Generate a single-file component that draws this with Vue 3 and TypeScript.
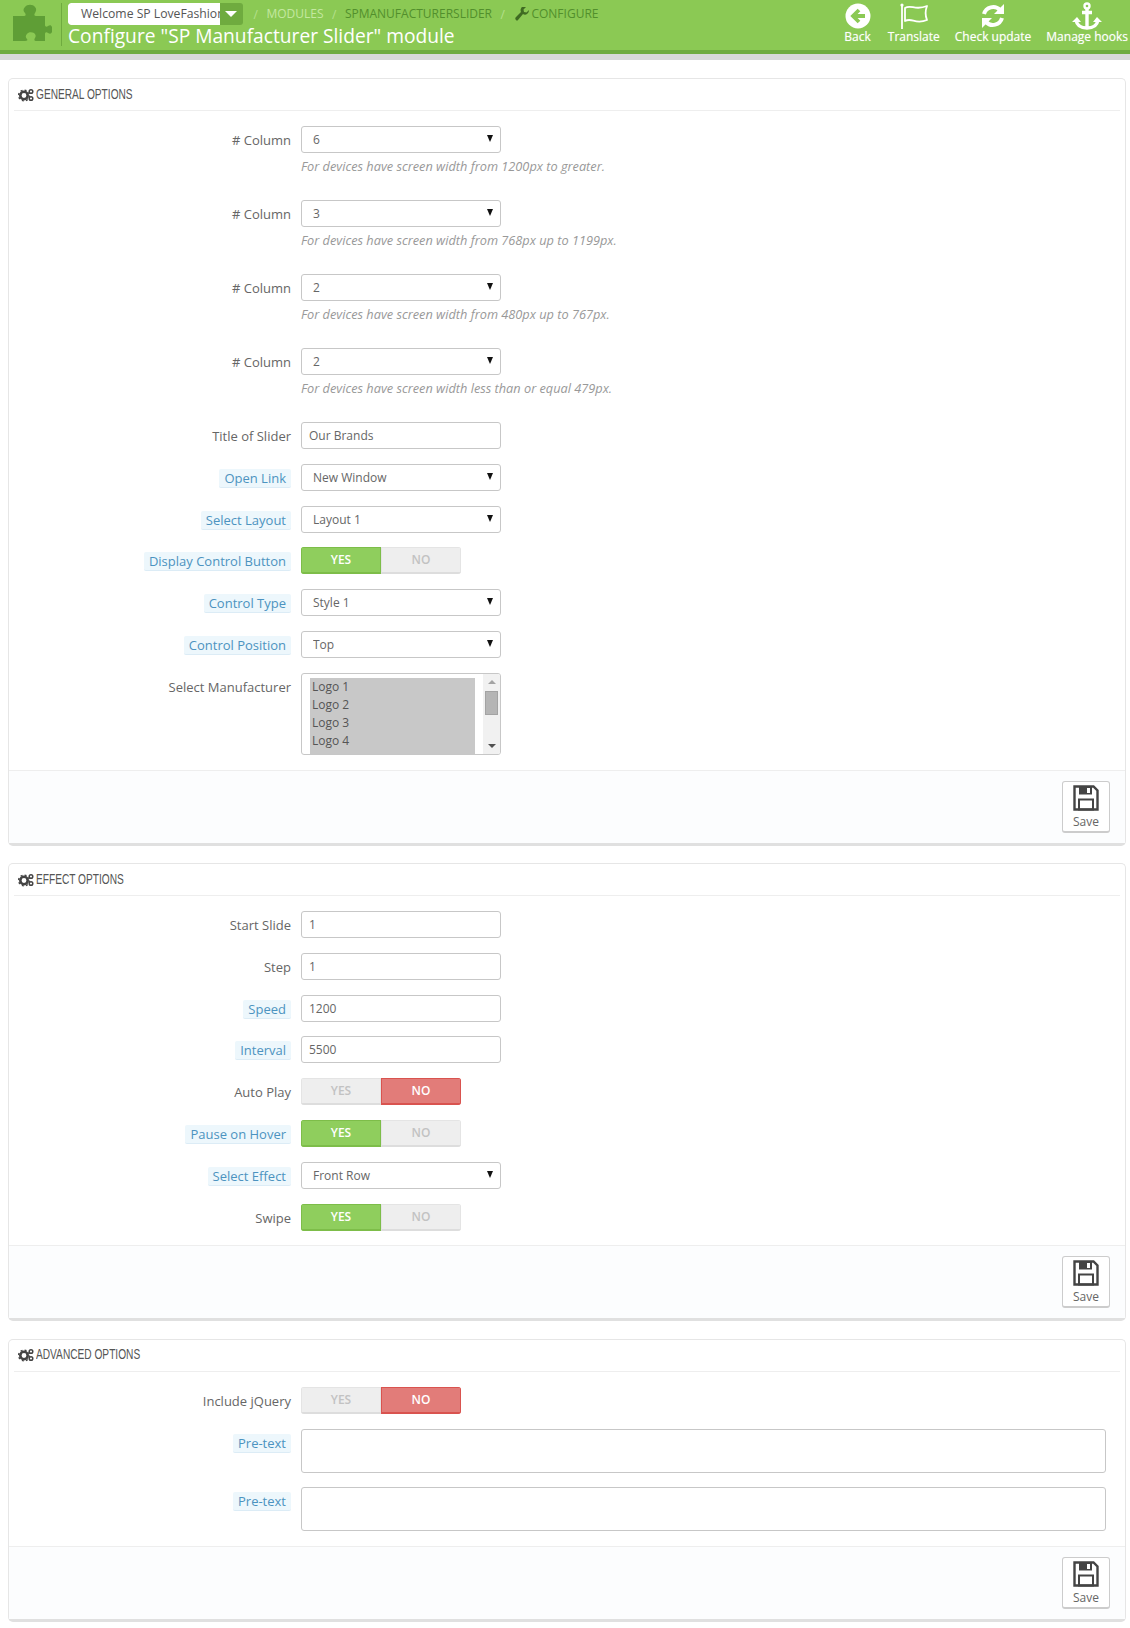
<script setup lang="ts">
type Row = {
  label: string
  hint?: boolean
  type: 'select' | 'input' | 'toggle' | 'list' | 'area'
  value?: string
  on?: boolean
  help?: string
}

const sections: { title: string; rows: Row[] }[] = [
  {
    title: 'General Options',
    rows: [
      { label: '# Column', type: 'select', value: '6', help: 'For devices have screen width from 1200px to greater.' },
      { label: '# Column', type: 'select', value: '3', help: 'For devices have screen width from 768px up to 1199px.' },
      { label: '# Column', type: 'select', value: '2', help: 'For devices have screen width from 480px up to 767px.' },
      { label: '# Column', type: 'select', value: '2', help: 'For devices have screen width less than or equal 479px.' },
      { label: 'Title of Slider', type: 'input', value: 'Our Brands' },
      { label: 'Open Link', hint: true, type: 'select', value: 'New Window' },
      { label: 'Select Layout', hint: true, type: 'select', value: 'Layout 1' },
      { label: 'Display Control Button', hint: true, type: 'toggle', on: true },
      { label: 'Control Type', hint: true, type: 'select', value: 'Style 1' },
      { label: 'Control Position', hint: true, type: 'select', value: 'Top' },
      { label: 'Select Manufacturer', type: 'list' }
    ]
  },
  {
    title: 'Effect Options',
    rows: [
      { label: 'Start Slide', type: 'input', value: '1' },
      { label: 'Step', type: 'input', value: '1' },
      { label: 'Speed', hint: true, type: 'input', value: '1200' },
      { label: 'Interval', hint: true, type: 'input', value: '5500' },
      { label: 'Auto Play', type: 'toggle', on: false },
      { label: 'Pause on Hover', hint: true, type: 'toggle', on: true },
      { label: 'Select Effect', hint: true, type: 'select', value: 'Front Row' },
      { label: 'Swipe', type: 'toggle', on: true }
    ]
  },
  {
    title: 'Advanced Options',
    rows: [
      { label: 'Include jQuery', type: 'toggle', on: false },
      { label: 'Pre-text', hint: true, type: 'area' },
      { label: 'Pre-text', hint: true, type: 'area' }
    ]
  }
]

const logos = ['Logo 1', 'Logo 2', 'Logo 3', 'Logo 4']
</script>

<template>
  <div class="page">
    <header class="topbar">
      <svg class="puzzle" viewBox="0 0 40 38" width="40" height="38">
        <path d="M1 13h11c2 0 2-2 1-3-2-2-2-4 0-6 2-3 8-3 10 0 2 2 1 4 0 6-1 1-1 3 1 3h9v9c0 2 2 2 3 1 2-1 3-1 4 1v5c-1 2-2 2-4 1-1-1-3-1-3 1v7H24c-2 0-2-2-1-3 1-2 1-3-1-5-2-1-6-1-7 1-2 2-1 4 0 5 1 1 0 2-2 2H1z" fill="#5f9e36" />
      </svg>
      <div class="titles">
        <div class="crumbs">
          <div class="shop">
            <span class="shop-name">Welcome SP LoveFashion</span>
            <span class="shop-caret"></span>
          </div>
          <span class="sep">/</span>
          <span class="crumb first">MODULES</span>
          <span class="sep">/</span>
          <span class="crumb">SPMANUFACTURERSLIDER</span>
          <span class="sep">/</span>
          <span class="crumb last">
            <svg viewBox="0 0 14 14" width="14" height="14">
              <path d="M1 13c-1-1-1-2 0-3l5-5c-1-2 0-4 1-5 1-1 3-1 4 0L8.500 2.500 9 5l2.500.5L14 3c0 2-1 3-2 4-1 1-3 1-4 0l-5 6c-1 1-1 1-2 0z" fill="#3f6b22" />
            </svg>
            CONFIGURE
          </span>
        </div>
        <h1>Configure "SP Manufacturer Slider" module</h1>
      </div>
      <nav class="actions">
        <a class="action back">
          <svg viewBox="0 0 26 26" width="26" height="26">
            <circle cx="13" cy="13" r="12.500" fill="#fff" />
            <path d="M20 13H9M14 7 8 13l6 6" fill="none" stroke="#8bc954" stroke-width="3.800" />
          </svg>
          <span>Back</span>
        </a>
        <a class="action translate">
          <svg viewBox="0 0 30 26" width="30" height="26">
            <circle cx="3" cy="2" r="1.600" fill="#fff" />
            <path d="M3 2v24" stroke="#fff" stroke-width="1.800" />
            <path d="M6 5c6-4 10 3 22-2-2 5-2 9 0 14-12 5-15-3-22 1z" fill="none" stroke="#fff" stroke-width="1.800" stroke-linejoin="round" />
          </svg>
          <span>Translate</span>
        </a>
        <a class="action update">
          <svg viewBox="0 0 26 26" width="26" height="26">
            <path d="M4 11a9.500 9.500 0 0 1 16-4" fill="none" stroke="#fff" stroke-width="4" />
            <path d="M24 1v10H14z" fill="#fff" />
            <path d="M22 15a9.500 9.500 0 0 1-16 4" fill="none" stroke="#fff" stroke-width="4" />
            <path d="M2 25V15h10z" fill="#fff" />
          </svg>
          <span>Check update</span>
        </a>
        <a class="action hooks">
          <svg viewBox="0 0 30 28" width="30" height="28">
            <circle cx="15" cy="4" r="2.500" fill="none" stroke="#fff" stroke-width="2.400" />
            <path d="M10 10.500h10M15 7v18" stroke="#fff" stroke-width="3.400" fill="none" />
            <path d="M4 18c1 6 6 8 11 8s10-2 11-8" fill="none" stroke="#fff" stroke-width="3.400" />
            <path d="M0 20l5-5 4 5zM30 20l-5-5-4 5z" fill="#fff" />
          </svg>
          <span>Manage hooks</span>
        </a>
      </nav>
    </header>
    <div class="subbar"></div>

    <main class="content">
      <section v-for="section in sections" :key="section.title" class="panel">
        <div class="panel-heading">
          <svg viewBox="0 0 16 14" width="16" height="14">
            <circle cx="6" cy="7.500" r="3.700" fill="none" stroke="#444" stroke-width="2.600" />
            <circle cx="6" cy="7.500" r="5.400" fill="none" stroke="#444" stroke-width="1.400" stroke-dasharray="2 2.240" />
            <circle cx="13" cy="3.500" r="1.800" fill="none" stroke="#444" stroke-width="1.500" />
            <circle cx="13" cy="10.500" r="1.800" fill="none" stroke="#444" stroke-width="1.500" />
          </svg>
          <span class="heading-text">{{ section.title }}</span>
        </div>

        <div class="form">
          <div v-for="(row, i) in section.rows" :key="i" class="form-row">
            <div class="label-cell">
              <span :class="['label', { hint: row.hint }]">{{ row.label }}</span>
            </div>
            <div class="control">
              <div v-if="row.type === 'select'" class="select-wrap">
                <select class="field select">
                  <option>{{ row.value }}</option>
                </select>
              </div>
              <input v-else-if="row.type === 'input'" class="field input" type="text" :value="row.value" />
              <div v-else-if="row.type === 'toggle'" class="toggle">
                <span :class="['half', { yes: row.on }]">YES</span>
                <span :class="['half', { no: !row.on }]">NO</span>
              </div>
              <div v-else-if="row.type === 'list'" class="listbox">
                <div class="options">
                  <div v-for="logo in logos" :key="logo" class="option">{{ logo }}</div>
                </div>
                <div class="scrollbar">
                  <span class="up"></span>
                  <span class="thumb"></span>
                  <span class="down"></span>
                </div>
              </div>
              <textarea v-else class="field area"></textarea>
              <p v-if="row.help" class="help">{{ row.help }}</p>
            </div>
          </div>
        </div>

        <div class="panel-footer">
          <button class="save" type="button">
            <svg viewBox="0 0 26 26" width="26" height="26">
              <path d="M1.500 1.500h19l4 4v19h-23z" fill="none" stroke="#444" stroke-width="2.400" />
              <path d="M6 1.500h13v8H6z" fill="#444" />
              <path d="M14 3h3v5h-3z" fill="#fff" />
              <path d="M6 14.500h14v10H6z" fill="none" stroke="#444" stroke-width="2" />
            </svg>
            <span>Save</span>
          </button>
        </div>
      </section>
    </main>
  </div>
</template>

<style>
html,
body {
  background: #fff;
}
</style>

<style scoped>
.page {
  width: 1130px;
  height: 1628px;
  overflow: hidden;
  font-family: "Open Sans", sans-serif;
  font-size: 13px;
  color: #666;
}

.topbar {
  height: 50px;
  background: #8bc954;
  border-bottom: 4px solid #6fab3f;
  display: flex;
  box-sizing: content-box;
}

.subbar {
  height: 6px;
  background: #d8d8d8;
}

.puzzle {
  margin: 3px 0 0 12px;
}

.titles {
  margin-left: 9px;
  padding-left: 6px;
  border-left: 1px solid #6fab3f;
  margin-top: 3px;
  height: 43px;
  flex: 1;
  min-width: 0;
}

.crumbs {
  display: flex;
  align-items: center;
  height: 22px;
}

.shop {
  display: flex;
  width: 175px;
  height: 22px;
  margin-right: 2px;
  background: #6fab3f;
  border-radius: 3px;
  overflow: hidden;
}

.shop-name {
  width: 152px;
  flex: none;
  background: #fff;
  color: #555;
  font-size: 12.200px;
  line-height: 21px;
  padding-left: 13px;
  box-sizing: border-box;
  white-space: nowrap;
  overflow: hidden;
  border-radius: 3px 0 0 3px;
}

.shop-caret {
  width: 0;
  height: 0;
  margin: 8px 0 0 5px;
  border-left: 6px solid transparent;
  border-right: 6px solid transparent;
  border-top: 6px solid #fff;
}

.sep {
  margin: 0 8.500px;
  color: #b5e08c;
  font-size: 12px;
}

.crumb {
  color: #528f2c;
  font-size: 12px;
  display: flex;
  align-items: center;
  gap: 2px;
  padding-bottom: 1px;
}

.crumb.first {
  color: #c4e8a0;
}

.crumb.last {
  margin-left: 2px;
}

h1 {
  margin: -1px 0 0;
  font-weight: 400;
  font-size: 19.200px;
  line-height: 24px;
  color: #fff;
  white-space: nowrap;
}

.actions {
  display: flex;
  align-items: flex-start;
  padding-right: 2px;
}

.action {
  display: flex;
  flex-direction: column;
  align-items: center;
  color: #fff;
  font-size: 12px;
  line-height: 14px;
  text-shadow: 0 0 1px rgba(255, 255, 255, .5);
  padding-top: 2px;
}

.action svg {
  height: 28px;
}

.back {
  margin-right: 17px;
}

.translate {
  margin-right: 15px;
}

.update {
  margin-right: 15px;
}

.content {
  padding: 18px 4px 0 8px;
}

.panel {
  border: 1px solid #e6e6e6;
  border-bottom: 3px solid #e0e0e0;
  border-radius: 5px;
  background: #fff;
  margin-bottom: 17.500px;
}

.panel-heading {
  margin: 0 5px;
  height: 31px;
  box-sizing: content-box;
  border-bottom: 1px solid #eee;
  display: flex;
  align-items: center;
  gap: 2px;
  padding-left: 4px;
  color: #555;
}

.heading-text {
  display: inline-block;
  transform: scaleX(0.7);
  transform-origin: left center;
  white-space: nowrap;
  font-family: "Liberation Sans", sans-serif;
  font-size: 14.500px;
  line-height: 16px;
  margin-bottom: 2px;
  text-transform: uppercase;
}

.form {
  padding-top: 15px;
}

.form-row {
  display: grid;
  grid-template-columns: 282px 1fr;
  column-gap: 10px;
  margin-bottom: 14.800px;
}

.label-cell {
  text-align: right;
  line-height: 18px;
  padding-top: 5px;
}

.label {
  display: inline-block;
  white-space: nowrap;
}

.label.hint {
  background: #edf7fc;
  color: #4c93c0;
  border-bottom: 1px solid #dcecf6;
  border-radius: 2px;
  padding: 0 5px;
}

.control {
  padding-right: 19px;
}

.field {
  display: block;
  box-sizing: border-box;
  width: 200px;
  height: 27px;
  border: 1px solid #c7c7c7;
  border-radius: 3px;
  background: #fff;
  color: #666;
  font-family: "Open Sans", sans-serif;
  font-size: 12px;
  outline: none;
}

.select-wrap {
  position: relative;
  width: 200px;
}

.select-wrap::after {
  content: "";
  position: absolute;
  right: 8px;
  top: 9px;
  border-left: 3.500px solid transparent;
  border-right: 3.500px solid transparent;
  border-top: 7px solid #111;
}

.select {
  appearance: none;
  -webkit-appearance: none;
  padding: 0 11px;
}

.input {
  padding: 0 7px;
}

.area {
  width: 100%;
  height: 44px;
  resize: none;
}

.help {
  margin: 4px 0 0;
  height: 28.200px;
  line-height: 18px;
  font-size: 12.750px;
  font-style: italic;
  color: #999;
  white-space: nowrap;
}

.toggle {
  display: flex;
  width: 160px;
  height: 27px;
  box-sizing: border-box;
  border-radius: 3px;
  overflow: hidden;
}

.half {
  width: 80px;
  height: 27px;
  box-sizing: border-box;
  text-align: center;
  font-weight: 600;
  font-size: 12px;
  line-height: 23px;
  background: #eee;
  color: #c2c2c2;
  border: 1px solid #e4e4e4;
  border-bottom: 2px solid #ddd;
}

.half.yes {
  background: #8fce5d;
  color: #fff;
  border: 1px solid #7dbd49;
  border-bottom-width: 2px;
}

.half.no {
  background: #e27c79;
  color: #fff;
  border: 1px solid #d9534f;
  border-bottom-width: 2px;
}

.listbox {
  display: flex;
  box-sizing: border-box;
  width: 200px;
  height: 82px;
  border: 1px solid #c7c7c7;
  border-radius: 3px;
  overflow: hidden;
}

.options {
  margin: 4px 0 0 8px;
  width: 165px;
  background: #c8c8c8;
  padding-left: 2px;
  box-sizing: border-box;
}

.option {
  height: 18px;
  line-height: 18px;
  font-size: 12px;
  color: #555;
}

.scrollbar {
  margin-left: auto;
  width: 17px;
  background: #f1f1f1;
  position: relative;
}

.thumb {
  position: absolute;
  left: 2px;
  top: 17px;
  width: 13px;
  height: 24px;
  background: #b5b5b5;
  border: 1px solid #a3a3a3;
  box-sizing: border-box;
}

.up,
.down {
  position: absolute;
  left: 5px;
  width: 0;
  height: 0;
  border-left: 4px solid transparent;
  border-right: 4px solid transparent;
}

.up {
  top: 6px;
  border-bottom: 4px solid #a3a3a3;
}

.down {
  bottom: 6px;
  border-top: 4px solid #505050;
}

.panel-footer {
  background: #fcfdfe;
  border-top: 1px solid #eee;
  padding: 10px 15px 10px;
  display: flex;
  justify-content: flex-end;
}

.save {
  width: 48px;
  height: 52px;
  padding: 3px 0 0;
  background: #fff;
  border: 1px solid #ccc;
  border-bottom-width: 2px;
  border-radius: 3px;
  color: #666;
  font-family: "Open Sans", sans-serif;
  font-size: 12px;
  line-height: 14px;
  display: flex;
  flex-direction: column;
  align-items: center;
}

.save span {
  margin-top: 4px;
}
</style>
